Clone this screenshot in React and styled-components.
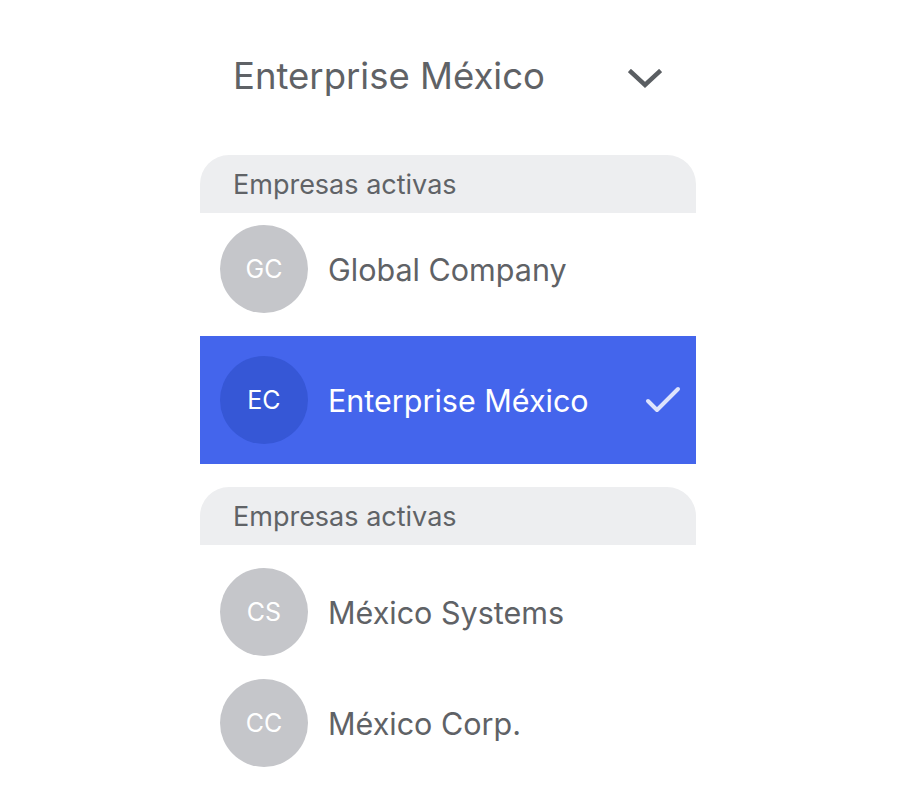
import React from 'react';
import styled, {createGlobalStyle} from 'styled-components';

const GlobalStyle = createGlobalStyle`
body {
    margin: 0;
    background: #fff;
    font-family: Inter, "Noto Sans", sans-serif;
}
`;

const Page = styled.div`
display: flex;
justify-content: flex-start;
padding-left: 200px;
`;

const Panel = styled.div`
width: 496px;
display: flex;
flex-direction: column;
`;

const TopBar = styled.div`
height: 152px;
margin-bottom: 3px;
display: flex;
align-items: center;
justify-content: space-between;
padding: 0 34px 0 33px;
color: #5f6266;
font-size: 36.5px;
font-weight: 400;

svg {
    margin-top: 5px;
}
`;

const SectionHeader = styled.div`
height: 58px;
display: flex;
align-items: center;
padding-left: 33px;
background: #edeef0;
border-radius: 29px 29px 0 0;
color: #606367;
font-size: 27px;
margin-top: ${p => p.$gap || 0}px;
`;

const List = styled.div`
display: flex;
flex-direction: column;
gap: 23px;
padding-top: ${p => p.$top}px;
`;

const Row = styled.div`
display: flex;
align-items: center;
padding: ${p => (p.$active ? '20px' : '0')} 15px ${p => (p.$active ? '20px' : '0')} 20px;
background: ${p => (p.$active ? '#4465ec' : 'transparent')};
color: ${p => (p.$active ? '#fff' : '#5f6266')};
font-size: 30.5px;
`;

const Avatar = styled.div`
width: 88px;
height: 88px;
border-radius: 50%;
flex-shrink: 0;
display: flex;
align-items: center;
justify-content: center;
background: ${p => (p.$active ? '#3657d6' : '#c5c6ca')};
color: #fff;
font-size: 25px;
font-weight: 400;
margin-right: 20px;
`;

const Name = styled.div`
flex: 1;
`;

const Chevron = () => (
    <svg width="34" height="20" viewBox="0 0 34 20">
        <polyline points="3,3 17,16 31,3" fill="none" stroke="#5a5e62" strokeWidth="4.5" strokeLinecap="square" />
    </svg>
);

const Check = () => (
    <svg width="36" height="28" viewBox="0 0 36 28">
        <polyline points="3,15 12,24 33,3" fill="none" stroke="rgba(255,255,255,0.82)" strokeWidth="4" strokeLinecap="round" strokeLinejoin="round" />
    </svg>
);

const Company = ({initials, name, active}) => (
    <Row $active={active}>
        <Avatar $active={active}>{initials}</Avatar>
        <Name>{name}</Name>
        {active && <Check />}
    </Row>
);

const App = () => {
    return (
        <Page>
            <GlobalStyle />
            <Panel>
                <TopBar>
                    <span>Enterprise México</span>
                    <Chevron />
                </TopBar>
                <SectionHeader>Empresas activas</SectionHeader>
                <List $top={12}>
                    <Company initials="GC" name="Global Company" />
                    <Company initials="EC" name="Enterprise México" active />
                </List>
                <SectionHeader $gap={23}>Empresas activas</SectionHeader>
                <List $top={23}>
                    <Company initials="CS" name="México Systems" />
                    <Company initials="CC" name="México Corp." />
                </List>
            </Panel>
        </Page>
    );
};

export default App;
